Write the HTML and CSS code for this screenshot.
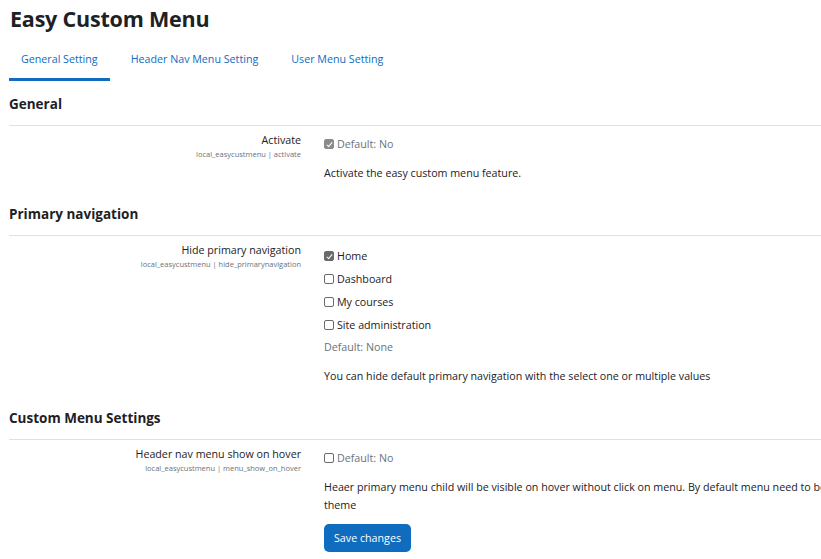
FILE: index.html
```html
<!DOCTYPE html>
<html>
<head>
<meta charset="utf-8">
<link rel="stylesheet" href="styles.css">
</head>
<body>
<div class="page">
  <h1 class="title">Easy Custom Menu</h1>
  <nav class="tabs">
    <a class="tab active">General Setting</a>
    <a class="tab">Header Nav Menu Setting</a>
    <a class="tab">User Menu Setting</a>
  </nav>

  <section class="group">
    <h3 class="group-title">General</h3>
    <div class="setting">
      <div class="label">
        <div class="name">Activate</div>
        <div class="key">local_easycustmenu | activate</div>
      </div>
      <div class="field">
        <label class="check muted"><span class="box checked disabled"></span>Default: No</label>
        <div class="desc">Activate the easy custom menu feature.</div>
      </div>
    </div>
  </section>

  <section class="group">
    <h3 class="group-title">Primary navigation</h3>
    <div class="setting multi">
      <div class="label">
        <div class="name">Hide primary navigation</div>
        <div class="key">local_easycustmenu | hide_primarynavigation</div>
      </div>
      <div class="field">
        <div class="checklist">
          <label class="check"><span class="box checked"></span>Home</label>
          <label class="check"><span class="box"></span>Dashboard</label>
          <label class="check"><span class="box"></span>My courses</label>
          <label class="check"><span class="box"></span>Site administration</label>
        </div>
        <div class="default">Default: None</div>
        <div class="desc">You can hide default primary navigation with the select one or multiple values</div>
      </div>
    </div>
  </section>

  <section class="group">
    <h3 class="group-title">Custom Menu Settings</h3>
    <div class="setting">
      <div class="label">
        <div class="name">Header nav menu show on hover</div>
        <div class="key">local_easycustmenu | menu_show_on_hover</div>
      </div>
      <div class="field">
        <label class="check muted"><span class="box"></span>Default: No</label>
        <div class="desc"><span class="nowrap">Heaer primary menu child will be visible on hover without click on menu. By default menu need to be clicked on the</span><br>theme</div>
        <button class="save">Save changes</button>
      </div>
    </div>
  </section>
</div>
</body>
</html>
```
FILE: styles.css
```css
html, body {
  margin: 0;
  padding: 0;
  overflow: hidden;
  background: #fff;
}
body {
  font-family: "Open Sans", "Noto Sans", sans-serif;
  font-size: 10.7px;
  color: #1d2125;
}
.page {
  padding: 4px 0 0 9px;
  width: 1000px;
}
.title {
  margin: 0 0 0 1px;
  font-size: 21.5px;
  font-weight: 700;
  line-height: 30px;
  letter-spacing: -0.2px;
}
.tabs {
  display: flex;
  margin-top: 8px;
}
.tab {
  color: #0f6cbf;
  padding: 9px 12px 11px;
  border-bottom: 3px solid transparent;
  line-height: 16px;
  margin-right: 9px;
}
.tab.active {
  border-bottom-color: #0f6cbf;
}
.group-title {
  margin: 0;
  font-size: 13.5px;
  font-weight: 700;
  line-height: 18px;
  padding: 14px 0 12px;
  border-bottom: 1px solid #dee2e6;
}
.setting {
  display: flex;
  padding-top: 7px;
  padding-bottom: 9px;
}
.setting.multi {
  padding-bottom: 10px;
}
.label {
  width: 292px;
  text-align: right;
}
.name {
  line-height: 14px;
}
.key {
  font-size: 7.5px;
  color: #6a737b;
  line-height: 14px;
}
.field {
  margin-left: 23px;
  padding-top: 3px;
}
.check {
  display: flex;
  align-items: center;
  line-height: 16px;
}
.check.muted {
  color: #6a737b;
}
.box {
  width: 10px;
  height: 10px;
  border: 1px solid #6a6a6a;
  border-radius: 2px;
  margin-right: 3px;
  box-sizing: border-box;
  position: relative;
  flex: none;
}
.box.checked {
  background: #6a6a6a;
}
.box.checked.disabled {
  background: #8a8a8a;
  border-color: #8a8a8a;
}
.box.checked::after {
  content: "";
  position: absolute;
  left: 2.5px;
  top: 0.5px;
  width: 2px;
  height: 5px;
  border: solid #fff;
  border-width: 0 1.5px 1.5px 0;
  transform: rotate(40deg);
}
.checklist {
  margin-top: 2px;
}
.checklist .check {
  margin-bottom: 7px;
}
.default {
  color: #6a737b;
  line-height: 16px;
  margin-top: -1px;
}
.desc {
  margin-top: 12px;
  line-height: 18px;
}
.nowrap {
  white-space: nowrap;
}
.save {
  margin-top: 10px;
  background: #0f6cbf;
  color: #fff;
  border: none;
  border-radius: 5px;
  font-family: inherit;
  font-size: 10.7px;
  padding: 7px 10px;
  line-height: 14px;
}
```
